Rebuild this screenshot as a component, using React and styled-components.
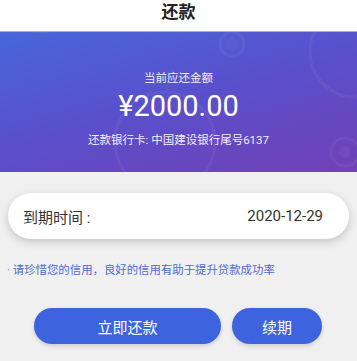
import React from "react";
import styled, { createGlobalStyle } from "styled-components";

const Global = createGlobalStyle`
  html, body { margin: 0; padding: 0; background: #f0f0f0; }
  body { font-family: Roboto, "Noto Sans CJK SC", sans-serif; }
`;

const Page = styled.div`
  width: 357px;
  height: 361px;
  background: #f0f0f0;
  display: flex;
  flex-direction: column;
  overflow: hidden;
`;

const Header = styled.div`
  height: 32px;
  background: #fff;
  display: flex;
  align-items: flex-start;
  justify-content: center;
  font-size: 17px;
  font-weight: 700;
  color: #222;
  line-height: 24px;
  border-bottom: 1px solid #a9afc6;
  box-sizing: border-box;
`;

const Banner = styled.div`
  position: relative;
  height: 140px;
  background: linear-gradient(165deg, #4866da 0%, #5a4fcb 50%, #7140b6 100%);
  display: flex;
  flex-direction: column;
  align-items: center;
  color: #fff;
  overflow: hidden;
`;

const Deco = styled.svg`
  position: absolute;
  inset: 0;
  pointer-events: none;
`;

const Label = styled.div`
  position: relative;
  margin-top: 39px;
  font-size: 11.5px;
  line-height: 14px;
  opacity: 0.9;
`;

const Amount = styled.div`
  position: relative;
  margin-top: 4px;
  font-size: 29px;
  line-height: 34px;
`;

const Bank = styled.div`
  position: relative;
  margin-top: 9px;
  font-size: 11.5px;
  line-height: 16px;
  opacity: 0.92;
`;

const Card = styled.div`
  margin: 21px 8px 0;
  height: 46px;
  border-radius: 23px;
  background: #fff;
  box-shadow: 0 3px 8px rgba(0, 0, 0, 0.18);
  display: flex;
  align-items: center;
  justify-content: space-between;
  padding: 0 26px 0 15px;
  font-size: 15px;
  color: #333;
`;

const Note = styled.div`
  margin: 24px 0 0 7px;
  font-size: 11.4px;
  line-height: 14px;
  color: #4d6bd3;
`;

const Buttons = styled.div`
  display: flex;
  gap: 11px;
  margin: 31px 0 0 34px;
`;

const Btn = styled.button`
  width: ${(p) => p.$w}px;
  height: 36px;
  border: none;
  border-radius: 18px;
  background: #3e63de;
  color: #fff;
  font-family: inherit;
  font-size: 15px;
  box-shadow: 0 2px 4px rgba(0, 0, 0, 0.15);
  padding: 0;
`;

export default function App() {
  return (
    <Page>
      <Global />
      <Header>还款</Header>
      <Banner>
        <Deco width="357" height="140" viewBox="0 0 357 140">
          <g fill="none" stroke="rgba(255,255,255,0.05)" strokeWidth="3">
            <circle cx="40" cy="-30" r="30" />
            <circle cx="355" cy="20" r="45" />
            <circle cx="232" cy="12" r="12" />
            <circle cx="345" cy="120" r="14" />
            <circle cx="165" cy="110" r="50" />
          </g>
          <g fill="rgba(255,255,255,0.04)">
            <circle cx="232" cy="12" r="6" />
            <circle cx="345" cy="120" r="6" />
          </g>
        </Deco>
        <Label>当前应还金额</Label>
        <Amount>¥2000.00</Amount>
        <Bank>还款银行卡: 中国建设银行尾号6137</Bank>
      </Banner>
      <Card>
        <span>到期时间 :</span>
        <span>2020-12-29</span>
      </Card>
      <Note>· 请珍惜您的信用，良好的信用有助于提升贷款成功率</Note>
      <Buttons>
        <Btn $w={187}>立即还款</Btn>
        <Btn $w={90}>续期</Btn>
      </Buttons>
    </Page>
  );
}
